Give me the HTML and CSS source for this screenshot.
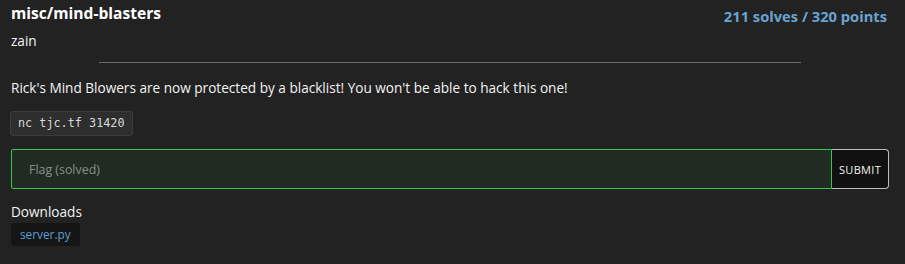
FILE: index.html
```html
<!DOCTYPE html>
<html>
<head>
<meta charset="utf-8">
<link rel="stylesheet" href="styles.css">
</head>
<body>
<div class="challenge">
  <div class="head">
    <div class="head-left">
      <div class="title">misc/mind-blasters</div>
      <div class="author">zain</div>
    </div>
    <div class="stats">211 solves / 320 points</div>
  </div>
  <hr class="divider">
  <p class="desc">Rick's Mind Blowers are now protected by a blacklist! You won't be able to hack this one!</p>
  <code class="cmd">nc tjc.tf 31420</code>
  <form class="flag-form">
    <input class="flag-input" type="text" placeholder="Flag (solved)">
    <button class="submit" type="button">SUBMIT</button>
  </form>
  <div class="downloads-label">Downloads</div>
  <div class="downloads">
    <a class="file" href="#">server.py</a>
  </div>
</div>
</body>
</html>
```
FILE: styles.css
```css
html, body {
  margin: 0;
  padding: 0;
  background: #222222;
}
body {
  font-family: "Open Sans", "Noto Sans", sans-serif;
  color: #f0f0f0;
}
.challenge {
  padding: 2px 16px 0 11px;
}
.head {
  display: flex;
  justify-content: space-between;
  align-items: flex-start;
}
.title {
  font-weight: 700;
  font-size: 15.6px;
  line-height: 22px;
  color: #ffffff;
}
.author {
  font-size: 13.6px;
  line-height: 18px;
  margin-top: 8px;
  color: #f2f2f2;
}
.stats {
  font-weight: 700;
  font-size: 14.7px;
  line-height: 22px;
  margin-top: 3px;
  margin-right: 2px;
  color: #69a3d3;
}
.divider {
  width: 80%;
  margin: 12px auto 0;
  border: 0;
  border-top: 1px solid #6a6a6a;
  height: 0;
}
.desc {
  margin: 16px 0 0;
  font-size: 13.6px;
  line-height: 18px;
  color: #f2f2f2;
}
.cmd {
  display: inline-block;
  margin: 14px 0 0 -1px;
  padding: 2px 7px;
  font-family: "DejaVu Sans Mono", monospace;
  font-size: 11.8px;
  line-height: 19px;
  color: #d8d8d8;
  background: #2e2e2e;
  border: 1px solid #3c3c3c;
  border-radius: 3px;
}
.flag-form {
  display: flex;
  margin-top: 13px;
}
.flag-input {
  flex: 1;
  height: 40px;
  box-sizing: border-box;
  margin: 0;
  padding: 0 17px;
  background: #222b22;
  border: 1px solid #2ecc54;
  border-radius: 2px 0 0 2px;
  font-family: inherit;
  font-size: 12.4px;
  color: #ddd;
  outline: none;
}
.flag-input::placeholder {
  color: #8a8f8a;
}
.submit {
  height: 40px;
  box-sizing: border-box;
  margin: 0;
  padding: 0 7px;
  background: #111111;
  color: #f4f4f4;
  border: 1px solid #bdbdbd;
  border-left: 0;
  border-radius: 0 4px 4px 0;
  font-family: inherit;
  font-size: 11px;
  letter-spacing: 0.3px;
}
.downloads-label {
  margin-top: 14px;
  font-size: 13.6px;
  line-height: 18px;
  color: #f2f2f2;
}
.downloads {
  margin-top: 2px;
  display: flex;
}
.file {
  display: inline-block;
  padding: 3px 9px;
  background: #151515;
  border-radius: 3px;
  font-size: 11.8px;
  line-height: 17px;
  color: #5b9fd6;
  text-decoration: none;
}
```
